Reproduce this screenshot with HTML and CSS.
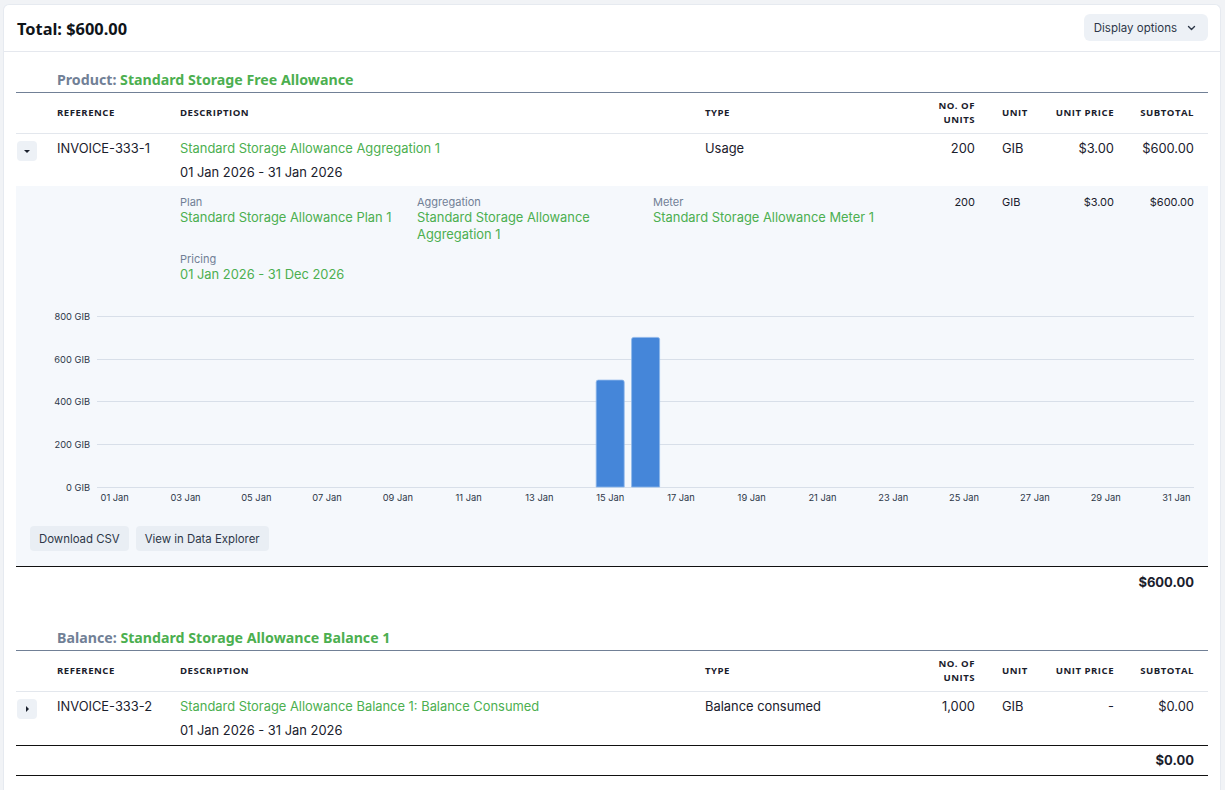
FILE: index.html
```html
<!DOCTYPE html>
<html lang="en">
<head>
<meta charset="utf-8">
<title>Invoice</title>
<link rel="stylesheet" href="styles.css">
</head>
<body>
<div class="card">
  <header class="card-head">
    <h1 class="total">Total: $600.00</h1>
    <button class="display-btn">Display options
      <svg class="chev" width="9" height="6" viewBox="0 0 9 6"><path d="M1.5 1.5 L4.5 4.5 L7.5 1.5" fill="none" stroke="#2d3748" stroke-width="1.4" stroke-linecap="round" stroke-linejoin="round"/></svg>
    </button>
  </header>

  <div class="card-body">
    <section class="group">
      <h2 class="group-title"><span class="kind">Product:</span> <span class="name">Standard Storage Free Allowance</span></h2>
      <div class="grid head">
        <div></div>
        <div>Reference</div>
        <div>Description</div>
        <div>Type</div>
        <div class="r">No. of<br>units</div>
        <div class="u">Unit</div>
        <div class="r">Unit price</div>
        <div class="r">Subtotal</div>
      </div>
      <div class="grid row open">
        <div><button class="toggle"><span class="tri down"></span></button></div>
        <div>INVOICE-333-1</div>
        <div>
          <div class="link">Standard Storage Allowance Aggregation 1</div>
          <div class="period">01 Jan 2026 - 31 Jan 2026</div>
        </div>
        <div>Usage</div>
        <div class="r">200</div>
        <div class="u">GIB</div>
        <div class="r">$3.00</div>
        <div class="r">$600.00</div>
      </div>
      <div class="details">
        <div class="grid detail-grid">
          <div></div>
          <div></div>
          <div class="meta">
            <div class="meta-item">
              <div class="meta-label">Plan</div>
              <div class="meta-value">Standard Storage Allowance Plan 1</div>
            </div>
            <div class="meta-item">
              <div class="meta-label">Aggregation</div>
              <div class="meta-value">Standard Storage Allowance Aggregation 1</div>
            </div>
            <div class="meta-item">
              <div class="meta-label">Meter</div>
              <div class="meta-value">Standard Storage Allowance Meter 1</div>
            </div>
            <div class="meta-item">
              <div class="meta-label">Pricing</div>
              <div class="meta-value">01 Jan 2026 - 31 Dec 2026</div>
            </div>
          </div>
          <div class="r small">200</div>
          <div class="u small">GIB</div>
          <div class="r small">$3.00</div>
          <div class="r small">$600.00</div>
        </div>

        <svg class="chart" width="1192" height="215" viewBox="0 0 1192 215">
          <g stroke="#d8dfe9" stroke-width="1">
            <line x1="81" y1="16.5" x2="1178" y2="16.5"/>
            <line x1="81" y1="59.5" x2="1178" y2="59.5"/>
            <line x1="81" y1="101.5" x2="1178" y2="101.5"/>
            <line x1="81" y1="144.5" x2="1178" y2="144.5"/>
            <line x1="81" y1="187.5" x2="1178" y2="187.5"/>
          </g>
          <g class="ylab" text-anchor="end">
            <text x="74" y="19.5">800 GIB</text>
            <text x="74" y="62.5">600 GIB</text>
            <text x="74" y="104.5">400 GIB</text>
            <text x="74" y="147.5">200 GIB</text>
            <text x="74" y="190.5">0 GIB</text>
          </g>
          <g class="xlab" text-anchor="middle">
            <text x="98.7" y="200.5">01 Jan</text>
            <text x="169.5" y="200.5">03 Jan</text>
            <text x="240.3" y="200.5">05 Jan</text>
            <text x="311" y="200.5">07 Jan</text>
            <text x="381.8" y="200.5">09 Jan</text>
            <text x="452.6" y="200.5">11 Jan</text>
            <text x="523.4" y="200.5">13 Jan</text>
            <text x="594.2" y="200.5">15 Jan</text>
            <text x="665" y="200.5">17 Jan</text>
            <text x="735.7" y="200.5">19 Jan</text>
            <text x="806.5" y="200.5">21 Jan</text>
            <text x="877.3" y="200.5">23 Jan</text>
            <text x="948.1" y="200.5">25 Jan</text>
            <text x="1018.9" y="200.5">27 Jan</text>
            <text x="1089.7" y="200.5">29 Jan</text>
            <text x="1160.4" y="200.5">31 Jan</text>
          </g>
          <g fill="#4586d9" stroke="#8db6ea" stroke-width="0.8">
            <path d="M580.2 187 V82.1 Q580.2 80.1 582.2 80.1 H606.2 Q608.2 80.1 608.2 82.1 V187 Z"/>
            <path d="M615.6 187 V39.4 Q615.6 37.4 617.6 37.4 H641.6 Q643.6 37.4 643.6 39.4 V187 Z"/>
          </g>
        </svg>

        <div class="actions">
          <button class="btn">Download CSV</button>
          <button class="btn">View in Data Explorer</button>
        </div>
      </div>
      <div class="foot">$600.00</div>
    </section>

    <section class="group second">
      <h2 class="group-title"><span class="kind">Balance:</span> <span class="name">Standard Storage Allowance Balance 1</span></h2>
      <div class="grid head">
        <div></div>
        <div>Reference</div>
        <div>Description</div>
        <div>Type</div>
        <div class="r">No. of<br>units</div>
        <div class="u">Unit</div>
        <div class="r">Unit price</div>
        <div class="r">Subtotal</div>
      </div>
      <div class="grid row closed">
        <div><button class="toggle"><span class="tri right"></span></button></div>
        <div>INVOICE-333-2</div>
        <div>
          <div class="link">Standard Storage Allowance Balance 1: Balance Consumed</div>
          <div class="period">01 Jan 2026 - 31 Jan 2026</div>
        </div>
        <div>Balance consumed</div>
        <div class="r">1,000</div>
        <div class="u">GIB</div>
        <div class="r">-</div>
        <div class="r">$0.00</div>
      </div>
      <div class="foot bordered">$0.00</div>
    </section>
  </div>
</div>
</body>
</html>
```

FILE: styles.css
```css
* { box-sizing: border-box; }
html, body { margin: 0; }
body {
  background: #f1f3f6;
  padding: 4px 4px 0 3px;
  font-family: Inter, "DejaVu Sans", sans-serif;
  color: #1a202c;
  font-size: 12.9px;
  line-height: 17px;
}
button { font-family: inherit; color: inherit; }

.card {
  background: #fff;
  border: 1px solid #e6eaf0;
  border-bottom: 0;
  border-radius: 6px 6px 0 0;
  min-height: 786px;
}

.card-head {
  height: 47px;
  border-bottom: 1px solid #e5e8ee;
  display: flex;
  align-items: center;
  justify-content: space-between;
  padding: 0 12px 0 13px;
}
.total {
  margin: 0;
  font-family: "Noto Sans", "Open Sans", sans-serif;
  font-size: 16.4px;
  font-weight: 700;
  color: #0f1419;
  line-height: 20px;
  margin-top: 2px;
}
.display-btn {
  height: 27px;
  border: 0;
  border-radius: 6px;
  background: #edf1f6;
  font-size: 11.5px;
  padding: 0 12px 0 10px;
  display: flex;
  align-items: center;
  gap: 10px;
  color: #2d3748;
  margin-top: -1px;
}

.card-body { padding: 0 12px; }

.group-title {
  margin: 18px 0 0;
  padding: 0 0 2px 41px;
  font-family: "Noto Sans", "Open Sans", sans-serif;
  font-size: 14.2px;
  line-height: 20px;
  font-weight: 700;
  border-bottom: 1px solid #718096;
}
.group-title .kind { color: #718096; }
.group-title .name { color: #4caf50; }
.second .group-title { margin-top: 31px; }

.grid {
  display: grid;
  grid-template-columns: 41px 123px 525px 1fr 69px 59px 80px 80px;
}
.grid .r { text-align: right; padding-right: 14px; }
.grid .u { padding-left: 13px; }

.head {
  height: 41px;
  align-items: center;
  border-bottom: 1px solid #e3e7ed;
  font-family: "Open Sans", "Noto Sans", sans-serif;
  font-size: 9.6px;
  font-weight: 700;
  letter-spacing: 0.5px;
  text-transform: uppercase;
  line-height: 14px;
  color: #1a202c;
}

.row {
  padding: 6px 0 5px;
}
.row.closed {
  padding-bottom: 6px;
  border-bottom: 1px solid #111;
}
.link { color: #4caf50; }
.period { margin-top: 7px; }

.toggle {
  width: 20px;
  height: 20px;
  margin: 1px 0 0 1px;
  border: 0;
  border-radius: 4px;
  background: #edf1f6;
  display: flex;
  align-items: center;
  justify-content: center;
  padding: 0;
}
.tri { width: 0; height: 0; display: block; }
.tri.down {
  border-left: 3px solid transparent;
  border-right: 3px solid transparent;
  border-top: 3px solid #1a202c;
  margin-top: 1px;
}
.tri.right {
  border-top: 3px solid transparent;
  border-bottom: 3px solid transparent;
  border-left: 3px solid #1a202c;
}

.details {
  background: #f5f8fc;
  border-bottom: 1px solid #111;
  padding: 9px 0 15px;
}
.detail-grid { align-items: start; }
.detail-grid .small { font-size: 11px; line-height: 14px; }
.meta {
  grid-column: 3 / 5;
  display: grid;
  grid-template-columns: 237px 236px 1fr;
  row-gap: 9px;
}
.meta-item { padding-right: 12px; }
.meta-label { font-size: 11px; line-height: 14px; color: #718096; }
.meta-value { color: #4caf50; line-height: 17px; }

.chart {
  display: block;
  margin-top: 17px;
}
.chart text {
  font-family: Inter, "DejaVu Sans", sans-serif;
  font-size: 9.3px;
  fill: #2d3748;
}

.actions {
  display: flex;
  gap: 7px;
  padding-left: 14px;
  margin-top: 11px;
}
.btn {
  height: 25px;
  border: 0;
  border-radius: 4px;
  background: #e9eef4;
  font-size: 11.4px;
  padding: 0 9px;
  color: #2d3748;
}

.foot {
  height: 30px;
  display: flex;
  align-items: center;
  justify-content: flex-end;
  padding-right: 14px;
  font-weight: 700;
  font-size: 13px;
}
.foot.bordered { border-bottom: 1px solid #111; }
```
